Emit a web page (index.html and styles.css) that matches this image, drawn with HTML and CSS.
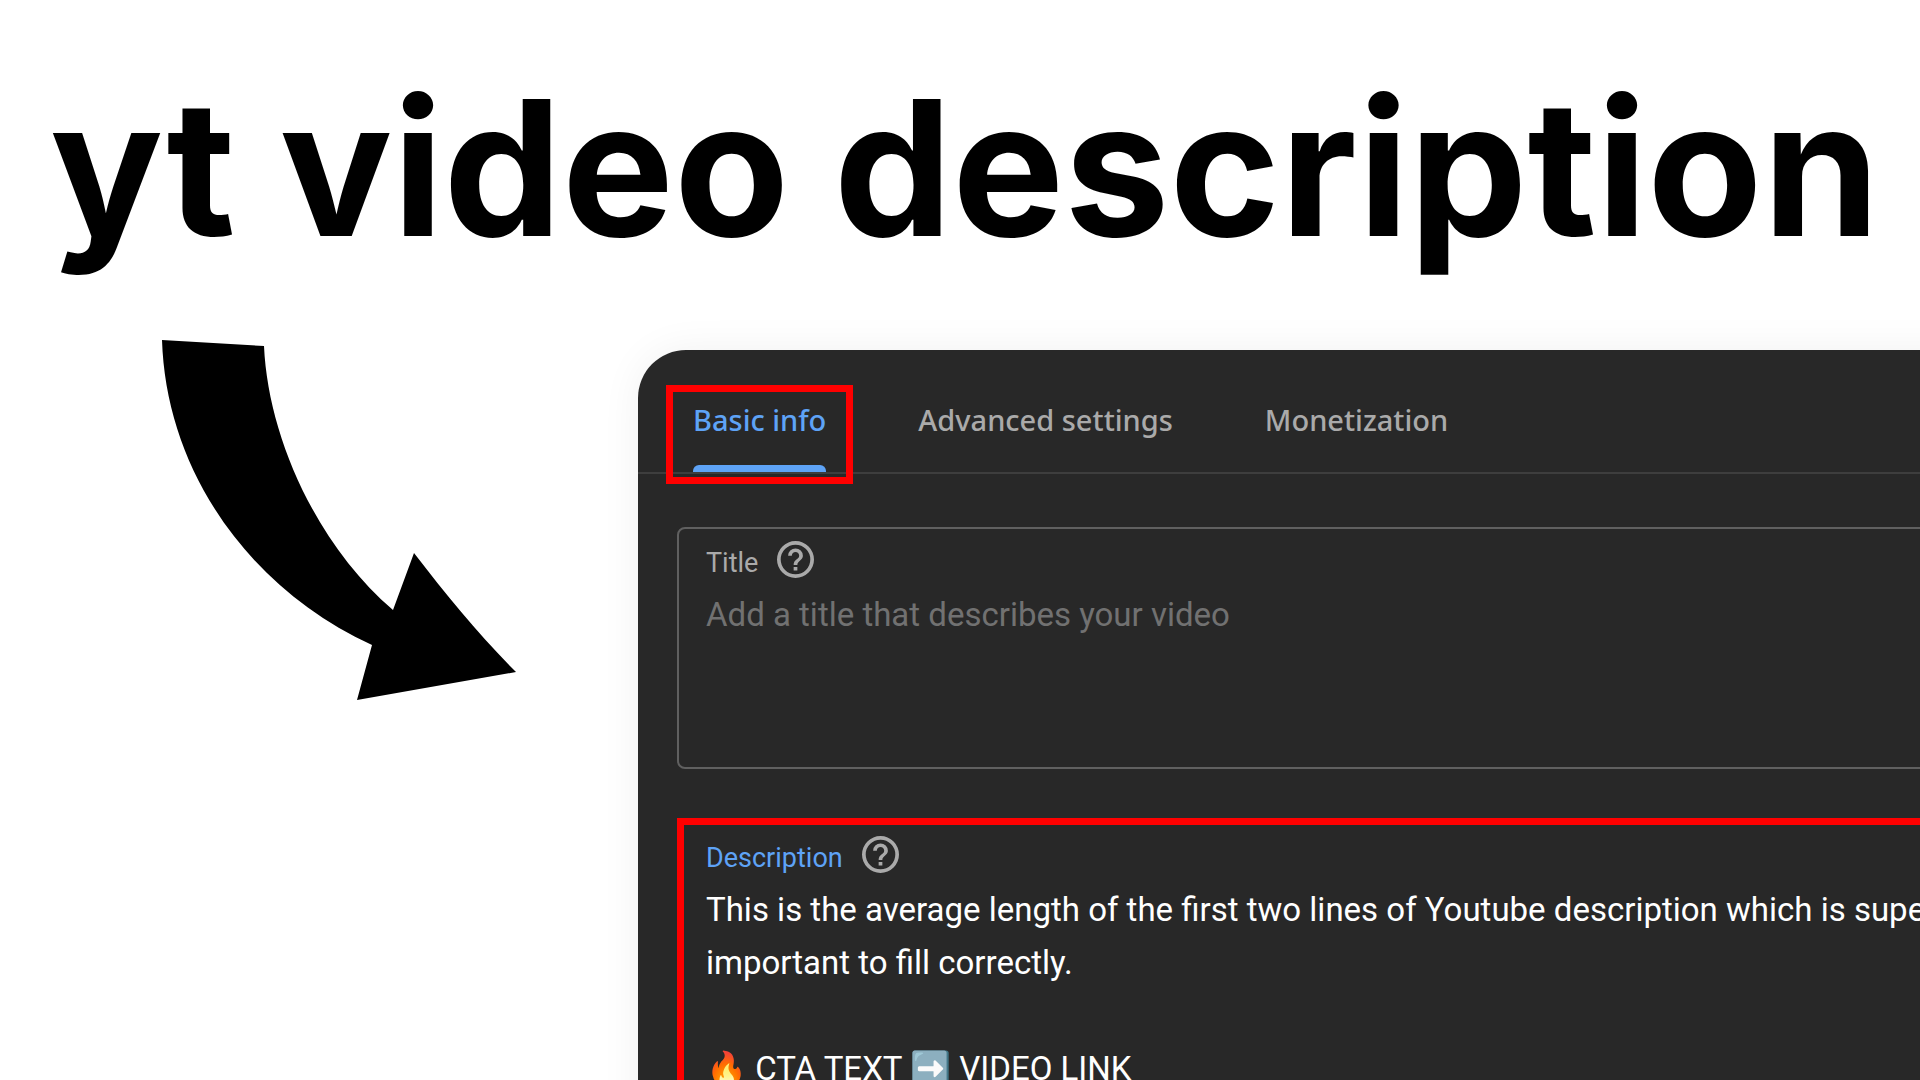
FILE: index.html
```
<!DOCTYPE html>
<html lang="en">
<head>
    <meta charset="UTF-8">
    <meta name="viewport" content="width=device-width, initial-scale=1.0">
    <title>yt video description</title>
    <link rel="stylesheet" href="styles.css">
</head>
<body>
    <h1 class="headline">yt video description</h1>

    <main class="stage">
        <svg class="arrow" viewBox="0 0 354 360" aria-hidden="true">
            <path d="M0 0L102 6C106 96 154 204 231 270L252 213C285 256 318 296 354 332L195 360L210 305C84 247 4 128 0 0Z"/>
        </svg>

        <section class="card">
            <nav class="tabs">
                <button class="tab active" type="button">Basic info</button>
                <button class="tab" type="button">Advanced settings</button>
                <button class="tab" type="button">Monetization</button>
            </nav>

            <form class="fields">
                <div class="field">
                    <div class="field-head">
                        <label for="title">Title</label>
                        <svg class="help" viewBox="0 0 20 20" aria-hidden="true">
                            <path d="M9 16h2v-2H9v2zM10 0a10 10 0 1 0 0 20 10 10 0 0 0 0-20zm0 18a8 8 0 1 1 0-16 8 8 0 0 1 0 16zm0-14a4 4 0 0 0-4 4h2c0-1.100.9-2 2-2s2 .9 2 2c0 2-3 1.750-3 5h2c0-2.250 3-2.500 3-5a4 4 0 0 0-4-4z"/>
                        </svg>
                    </div>
                    <textarea id="title" class="title-input" placeholder="Add a title that describes your video"></textarea>
                </div>

                <div class="field highlighted">
                    <div class="field-head">
                        <label for="description">Description</label>
                        <svg class="help" viewBox="0 0 20 20" aria-hidden="true">
                            <path d="M9 16h2v-2H9v2zM10 0a10 10 0 1 0 0 20 10 10 0 0 0 0-20zm0 18a8 8 0 1 1 0-16 8 8 0 0 1 0 16zm0-14a4 4 0 0 0-4 4h2c0-1.100.9-2 2-2s2 .9 2 2c0 2-3 1.750-3 5h2c0-2.250 3-2.500 3-5a4 4 0 0 0-4-4z"/>
                        </svg>
                    </div>
                    <textarea id="description" class="description-input">This is the average length of the first two lines of Youtube description which is super
important to fill correctly.

🔥 CTA TEXT ➡️ VIDEO LINK</textarea>
                </div>
            </form>
        </section>
    </main>
</body>
</html>
```
FILE: styles.css
```
* {
    margin: 0;
    padding: 0;
    box-sizing: border-box;
}

body {
    height: 100vh;
    overflow: hidden;
    background: #fff;
    font-family: Roboto, sans-serif;
}

.headline {
    padding: 36px 50px 0;
    font-family: Inter, sans-serif;
    font-size: 188px;
    font-weight: 700;
    line-height: 264px;
    white-space: nowrap;
    color: #000;
}

.stage {
    display: flex;
    align-items: flex-start;
    gap: 122px;
    padding: 40px 0 0 162px;
}

.arrow {
    flex: none;
    width: 354px;
}

.card {
    flex: 1;
    min-width: 0;
    margin-top: 10px;
    margin-right: -120px;
    border-radius: 48px 0 0 0;
    background: #282828;
    box-shadow: 0 0 40px rgba(0, 0, 0, 0.06);
}

.tabs {
    display: flex;
    gap: 92px;
    padding-left: 55px;
    border-bottom: 2px solid #3e3e3e;
}

.tab {
    position: relative;
    height: 122px;
    padding-top: 16px;
    border: none;
    background: none;
    font-family: "Noto Sans", sans-serif;
    font-size: 29px;
    font-weight: 500;
    color: #aaa;
    cursor: pointer;
}

.tab.active {
    color: #5ea3f6;
}

.tab.active::before {
    content: "";
    position: absolute;
    right: 0;
    bottom: 0;
    left: 0;
    height: 7px;
    border-radius: 6px 6px 0 0;
    background: #5ea3f6;
}

/* red marker round the active tab */
.tab.active::after {
    content: "";
    position: absolute;
    inset: 35px -27px -12px;
    border: 7px solid #f00;
}

.fields {
    display: flex;
    flex-direction: column;
    gap: 49px;
    padding: 53px 39px;
}

.field {
    padding: 11px 27px;
    border: 2px solid #606060;
    border-radius: 8px;
}

.field-head {
    display: flex;
    align-items: center;
    gap: 19px;
    height: 38px;
    font-size: 27px;
    color: #aaa;
}

.field-head label {
    padding-top: 7px;
}

.help {
    width: 37px;
    height: 37px;
    fill: #aaa;
}

textarea {
    display: block;
    width: 100%;
    border: none;
    outline: none;
    resize: none;
    background: none;
    font-family: Roboto, sans-serif;
    font-size: 33px;
    line-height: 53px;
    color: #fff;
}

.title-input {
    height: 168px;
    margin-top: 10px;
}

.title-input::placeholder {
    color: #717171;
}

.description-input {
    height: 400px;
    margin-top: 10px;
}

.highlighted {
    padding: 10px 22px;
    border: 7px solid #f00;
    border-radius: 0;
}

.highlighted label {
    color: #5ea3f6;
}
```
